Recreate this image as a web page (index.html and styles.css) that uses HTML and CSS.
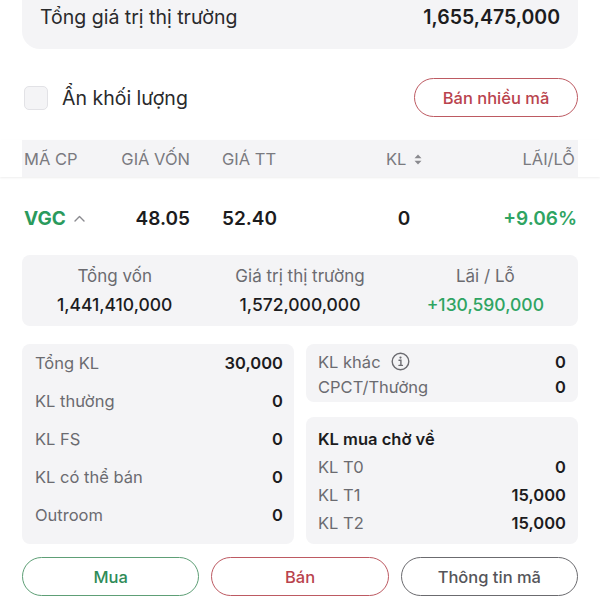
FILE: index.html
```html
<!DOCTYPE html>
<html lang="vi">
<head>
<meta charset="utf-8">
<link rel="stylesheet" href="styles.css">
</head>
<body>
<div class="page">
  <div class="wrap">
    <div class="total-card">
      <span class="total-label">Tổng giá trị thị trường</span>
      <span class="total-value">1,655,475,000</span>
    </div>

    <div class="toolbar">
      <label class="check">
        <span class="box"></span>
        <span class="check-text">Ẩn khối lượng</span>
      </label>
      <button class="btn-outline red small">Bán nhiều mã</button>
    </div>
  </div>

  <div class="thead-wrap">
    <div class="thead grid">
      <span>MÃ CP</span>
      <span class="r">GIÁ VỐN</span>
      <span class="c3">GIÁ TT</span>
      <span class="c">KL <svg class="sort" width="8" height="11" viewBox="0 0 8 11"><path d="M4 0.5 L7.5 4.3 H0.5 Z M4 10.5 L7.5 6.7 H0.5 Z" fill="#8a8a8f"/></svg></span>
      <span class="r">LÃI/LỖ</span>
    </div>
  </div>

  <div class="wrap">
    <div class="row grid">
      <span class="sym">VGC <svg class="caret" width="11" height="7" viewBox="0 0 11 7"><path d="M1 6 L5.5 1.5 L10 6" fill="none" stroke="#8a8a8f" stroke-width="1.4" stroke-linecap="round" stroke-linejoin="round"/></svg></span>
      <span class="r">48.05</span>
      <span class="c3">52.40</span>
      <span class="c">0</span>
      <span class="r green">+9.06%</span>
    </div>

    <div class="summary">
      <div class="sum-col">
        <span class="sum-label">Tổng vốn</span>
        <span class="sum-value">1,441,410,000</span>
      </div>
      <div class="sum-col">
        <span class="sum-label">Giá trị thị trường</span>
        <span class="sum-value">1,572,000,000</span>
      </div>
      <div class="sum-col">
        <span class="sum-label">Lãi / Lỗ</span>
        <span class="sum-value pos">+130,590,000</span>
      </div>
    </div>

    <div class="details">
      <div class="panel left">
        <div class="kv"><span class="k">Tổng KL</span><span class="v">30,000</span></div>
        <div class="kv"><span class="k">KL thường</span><span class="v">0</span></div>
        <div class="kv"><span class="k">KL FS</span><span class="v">0</span></div>
        <div class="kv"><span class="k">KL có thể bán</span><span class="v">0</span></div>
        <div class="kv"><span class="k">Outroom</span><span class="v">0</span></div>
      </div>
      <div class="right-col">
        <div class="panel other">
          <div class="kv"><span class="k">KL khác <svg class="info" width="19" height="19" viewBox="0 0 19 19"><circle cx="9.5" cy="9.5" r="8.3" fill="none" stroke="#6b6b70" stroke-width="1.4"/><circle cx="9.5" cy="5.6" r="1.1" fill="#6b6b70"/><path d="M8 8.3 H9.9 V13.4 M8 13.4 H11.4" fill="none" stroke="#6b6b70" stroke-width="1.4" stroke-linecap="round"/></svg></span><span class="v">0</span></div>
          <div class="kv"><span class="k">CPCT/Thưởng</span><span class="v">0</span></div>
        </div>
        <div class="panel pending">
          <div class="kv"><span class="title">KL mua chờ về</span></div>
          <div class="kv"><span class="k">KL T0</span><span class="v">0</span></div>
          <div class="kv"><span class="k">KL T1</span><span class="v">15,000</span></div>
          <div class="kv"><span class="k">KL T2</span><span class="v">15,000</span></div>
        </div>
      </div>
    </div>

    <div class="actions">
      <button class="btn-outline green-b">Mua</button>
      <button class="btn-outline red">Bán</button>
      <button class="btn-outline gray">Thông tin mã</button>
    </div>
  </div>
</div>
</body>
</html>
```

FILE: styles.css
```css
* { box-sizing: border-box; }

html, body {
  margin: 0;
  padding: 0;
  background: #ffffff;
}

body {
  font-family: "Inter", "Noto Sans", "Liberation Sans", sans-serif;
  color: #1c1c1e;
  width: 600px;
  height: 600px;
  overflow: hidden;
}

.wrap {
  padding: 0 22px;
}

.total-card {
  height: 49px;
  background: #f4f4f6;
  border-radius: 0 0 18px 18px;
  padding: 5px 18px 0 18px;
  display: flex;
  justify-content: space-between;
  align-items: flex-start;
  line-height: 25px;
}

.total-label {
  font-size: 19.5px;
  color: #2a2a2c;
}

.total-value {
  font-size: 19.5px;
  font-weight: 600;
  color: #1c1c1e;
}

.toolbar {
  margin-top: 29px;
  height: 39px;
  display: flex;
  justify-content: space-between;
  align-items: center;
}

.check {
  display: flex;
  align-items: center;
  padding-left: 2px;
}

.box {
  width: 24px;
  height: 24px;
  border: 1px solid #e2e2e6;
  border-radius: 5px;
  background: #f4f4f6;
}

.check-text {
  margin-left: 14px;
  font-size: 19.5px;
  color: #2a2a2c;
}

.btn-outline {
  font-family: inherit;
  background: #fff;
  height: 39px;
  border-radius: 20px;
  border: 1.5px solid;
  font-size: 16.5px;
  font-weight: 500;
  padding: 0;
  display: flex;
  align-items: center;
  justify-content: center;
}

.btn-outline.small {
  width: 164px;
}

.red { border-color: #bd5a62; color: #b9434d; }
.green-b { border-color: #5e9f76; color: #2e8b57; }
.gray { border-color: #6b6b6f; color: #55555a; }

.thead-wrap {
  margin-top: 23px;
  padding: 0 22px;
  box-shadow: 0 1px 2px rgba(0, 0, 0, 0.07);
}

.grid {
  display: grid;
  grid-template-columns: 94px 72px 182px 64px 1fr;
  align-items: center;
}

.grid .r { text-align: right; }
.grid .c { text-align: center; }
.grid .c3 { padding-left: 32px; }

.thead {
  height: 37px;
  background: #f4f4f6;
  padding: 0 3px 0 2px;
  font-size: 16.5px;
  color: #7a7a7f;
}

.sort {
  vertical-align: 0px;
  margin-left: 3px;
}

.row {
  height: 78px;
  padding: 5px 1px 0 2px;
  font-size: 19px;
  font-weight: 600;
  color: #1c1c1e;
}

.sym {
  color: #2a9a5c;
  font-weight: 700;
}

.caret {
  margin-left: 4px;
  vertical-align: 3px;
}

.green { color: #2fa463; }

.summary {
  height: 71px;
  background: #f4f4f6;
  border-radius: 8px;
  display: grid;
  grid-template-columns: 1fr 1fr 1fr;
  align-content: center;
}

.sum-col {
  display: flex;
  flex-direction: column;
  align-items: center;
  gap: 7px;
}

.sum-label {
  font-size: 17px;
  color: #6b6b70;
  line-height: 21px;
}

.sum-value {
  font-size: 17.5px;
  font-weight: 500;
  line-height: 21px;
  color: #1c1c1e;
}

.sum-value.pos {
  color: #2fa463;
}

.details {
  margin-top: 18px;
  display: grid;
  grid-template-columns: 1fr 1fr;
  gap: 12px;
}

.panel {
  background: #f4f4f6;
  border-radius: 8px;
}

.left {
  height: 200px;
  padding: 0 11px 10px 13px;
}

.left .kv { height: 38px; }

.right-col {
  display: flex;
  flex-direction: column;
  gap: 15px;
}

.other {
  height: 58px;
  padding: 5px 12px 3px 12px;
}

.other .kv { height: 25px; }

.pending {
  height: 127px;
  padding: 8px 12px 7px 12px;
}

.pending .kv { height: 28px; }

.kv {
  display: flex;
  justify-content: space-between;
  align-items: center;
}

.k {
  font-size: 16.5px;
  color: #6b6b70;
  display: flex;
  align-items: center;
}

.v {
  font-size: 16.5px;
  font-weight: 600;
  color: #1c1c1e;
}

.title {
  font-size: 16.5px;
  font-weight: 600;
  color: #1c1c1e;
}

.info {
  margin-left: 10px;
}

.actions {
  margin-top: 13px;
  display: grid;
  grid-template-columns: 1fr 1fr 1fr;
  gap: 12px;
}

.actions .btn-outline {
  width: 100%;
}
```
